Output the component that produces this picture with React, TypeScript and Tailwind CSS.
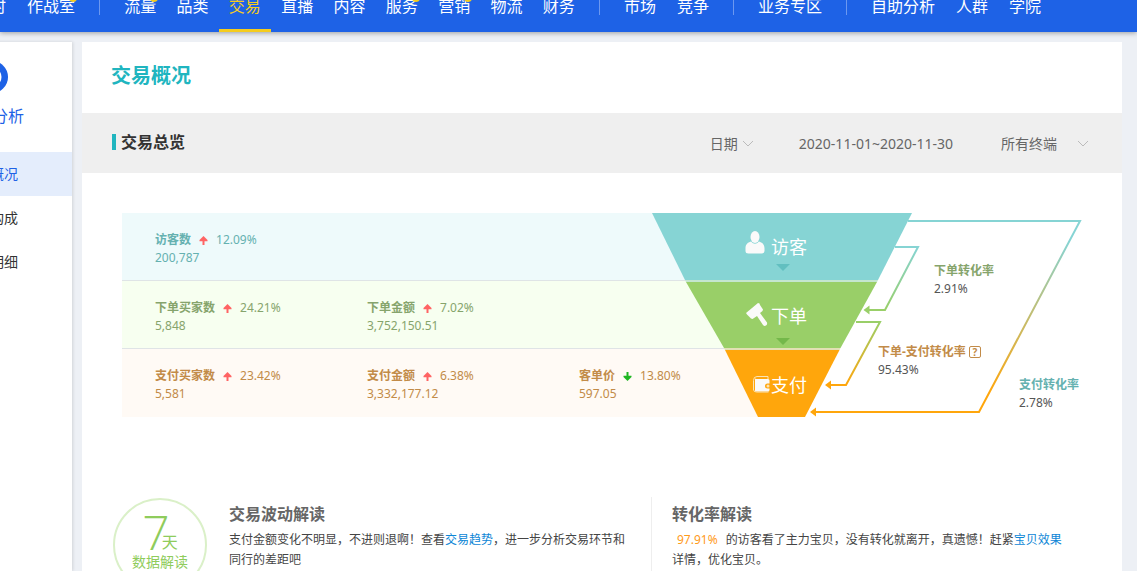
import clsx from "clsx";

const navGroups = [
  [{ name: "实时" }, { name: "作战室", isNew: true }],
  [
    { name: "流量", isNew: true },
    { name: "品类" },
    { name: "交易", active: true },
    { name: "直播" },
    { name: "内容" },
    { name: "服务", isNew: true },
    { name: "营销", isNew: true },
    { name: "物流" },
    { name: "财务" },
  ],
  [{ name: "市场" }, { name: "竞争" }],
  [{ name: "业务专区" }],
  [{ name: "自助分析" }, { name: "人群" }, { name: "学院" }],
] as { name: string; isNew?: boolean; active?: boolean }[][];

const sideItems = ["交易概况", "交易构成", "交易明细"];

const rows = [
  {
    className: "bg-[#eefafb] text-[#65b1b0] border-b border-[#dfe4e6]",
    items: [{ label: "访客数", change: "12.09%", up: true, value: "200,787" }],
  },
  {
    className: "bg-[#f7fff0] text-[#86a46c] border-b border-[#dfe4e6]",
    items: [
      { label: "下单买家数", change: "24.21%", up: true, value: "5,848" },
      { label: "下单金额", change: "7.02%", up: true, value: "3,752,150.51" },
    ],
  },
  {
    className: "bg-[#fffaf5] text-[#c28b48]",
    items: [
      { label: "支付买家数", change: "23.42%", up: true, value: "5,581" },
      { label: "支付金额", change: "6.38%", up: true, value: "3,332,177.12" },
      { label: "客单价", change: "13.80%", up: false, value: "597.05" },
    ],
  },
];

function Header() {
  return (
    <header className="relative z-10 flex h-8 items-end overflow-hidden bg-[#1e62e6]">
      <nav className="-ml-[36px] flex h-[52px] shrink-0 items-center text-base text-white">
        {navGroups.map((group, i) => (
          <div key={i} className="flex items-center">
            {i > 0 && <span className="mx-[14px] h-[18px] w-px bg-[#6c98f0]" />}
            <div className={clsx(i === 1 ? "grid w-[471px] grid-cols-9" : "flex gap-px")}>
              {group.map((item) => (
                <a
                  key={item.name}
                  href="#"
                  className={clsx(
                    "relative flex h-[52px] items-center justify-center border-b-3 px-[10px] pt-0.5 whitespace-nowrap",
                    item.active ? "border-[#f5cc1d] text-[#f5cc1d]" : "border-transparent",
                  )}
                >
                  {item.name}
                  {item.isNew && (
                    <span className="absolute top-3 right-2 h-[10px] w-2 rounded-full bg-[#f5cc1d]" />
                  )}
                </a>
              ))}
            </div>
          </div>
        ))}
      </nav>
    </header>
  );
}

function Sidebar() {
  return (
    <aside className="-ml-[88px] w-[160px] shrink-0 bg-white pt-[19px] shadow-[1px_0_3px_rgba(0,0,0,0.12)]">
      <div className="flex flex-col items-center gap-[11px] pb-6 text-base text-[#1e62e6]">
        <svg width="32" height="32" viewBox="0 0 32 32">
          <circle cx="16" cy="16" r="16" fill="#1e62e6" />
          <circle cx="16" cy="16" r="8" fill="none" stroke="#fff" strokeWidth="3" />
        </svg>
        <span>交易分析</span>
      </div>
      <nav className="text-sm text-[#333]">
        {sideItems.map((item, i) => (
          <a
            key={item}
            href="#"
            className={clsx(
              "flex h-11 items-center justify-center pr-1",
              i === 0 && "bg-[#e4edfc] text-[#1e62e6]",
            )}
          >
            {item}
          </a>
        ))}
      </nav>
    </aside>
  );
}

function Chevron() {
  return (
    <svg width="12" height="8" viewBox="0 0 12 8" fill="none" stroke="#bbb" className="pointer-events-none">
      <path d="M1 1l5 5 5-5" />
    </svg>
  );
}

function Toolbar() {
  return (
    <div className="flex h-[60px] items-center justify-between bg-[#efefef] pr-[33px] pl-[30px]">
      <h2 className="flex items-center gap-[5px] pb-0.5 text-base leading-4 font-bold text-[#333]">
        <span className="h-4 w-1 bg-[#20b5bf]" />
        交易总览
      </h2>
      <div className="flex items-center pt-0.5 text-sm text-[#666]">
        <div className="flex items-center gap-1">
          <select aria-label="日期" className="w-7 appearance-none">
            <option>日期</option>
          </select>
          <Chevron />
        </div>
        <span className="ml-[45px]">2020-11-01~2020-11-30</span>
        <div className="ml-12 flex items-center gap-5">
          <select aria-label="终端" className="w-14 appearance-none">
            <option>所有终端</option>
          </select>
          <Chevron />
        </div>
      </div>
    </div>
  );
}

function Arrow({ up }: { up: boolean }) {
  return (
    <svg width="9" height="9" viewBox="0 0 9 9" className={clsx("mt-px", !up && "rotate-180")}>
      <path d="M4.5 0L8.500 4V5.200H5.500V9H3.500V5.200H.5V4z" fill={up ? "#ff6464" : "#1fb622"} />
    </svg>
  );
}

function Stats() {
  return (
    <div className="mr-[320px] min-w-0 text-xs leading-[18px] [grid-area:1/1]">
      {rows.map((row, i) => (
        <div key={i} className={clsx("flex h-[68px] pt-[18px] pl-[33px]", row.className)}>
          {row.items.map((item) => (
            <dl key={item.label} className="w-[212px] shrink-0">
              <dt className="flex items-center">
                <b>{item.label}</b>
                <span className="mx-2">
                  <Arrow up={item.up} />
                </span>
                {item.change}
              </dt>
              <dd>{item.value}</dd>
            </dl>
          ))}
        </div>
      ))}
    </div>
  );
}

function Funnel() {
  return (
    <div className="relative z-0 h-[204px] w-[430px] justify-self-end text-xs leading-[18px] text-[#555] [grid-area:1/1]">
      <svg width="430" height="204" viewBox="0 0 430 204" className="absolute inset-0">
        <defs>
          <linearGradient id="pay" gradientUnits="userSpaceOnUse" x1="0" y1="8" x2="0" y2="199">
            <stop offset="0.1" stopColor="#86d4d4" />
            <stop offset="0.9" stopColor="#ffa60c" />
          </linearGradient>
          <linearGradient id="order" gradientUnits="userSpaceOnUse" x1="0" y1="34" x2="0" y2="97">
            <stop offset="0" stopColor="#86d4d4" />
            <stop offset="1" stopColor="#99cf68" />
          </linearGradient>
          <linearGradient id="orderPay" gradientUnits="userSpaceOnUse" x1="0" y1="109" x2="0" y2="172">
            <stop offset="0" stopColor="#99cf68" />
            <stop offset="1" stopColor="#ffa60c" />
          </linearGradient>
        </defs>
        {/* white backing hides the stat rows right of the funnel */}
        <path d="M260 0H430V204H153z" fill="#fff" />
        <path d="M0 0H260L226 67H33z" fill="#86d4d4" />
        <path d="M33 67H226L225 69H34z" fill="#c4e6cf" />
        <path d="M34 69H225L188.500 135H72z" fill="#99cf68" />
        <path d="M72 135H188.500L187.500 137H73z" fill="#e2e0b4" />
        <path d="M73 137H187.500L153 204H106z" fill="#ffa60c" />

        <g fill="none" strokeWidth="2">
          <path d="M256 8H428L327 199H163" stroke="url(#pay)" />
          <path d="M243 34H266L233 97H216" stroke="url(#order)" />
          <path d="M204 109H228L194 172H178" stroke="url(#orderPay)" />
        </g>
        <path d="M158 199l6-4.500v9z" fill="#ffa60c" />
        <path d="M211.500 97l6-4.500v9z" fill="#99cf68" />
        <path d="M173 172l6-4.500v9z" fill="#ffa60c" />

        <path d="M124 51h14l-7 7z" fill="#62bfc0" />
        <path d="M124 125h14l-7 7z" fill="#74b84a" />

        <g fill="#fafafa">
          <ellipse cx="103" cy="24" rx="4.500" ry="6" />
          <path d="M99 28.500q4 4.500 8 0c3.500 1 5.500 3 5.500 7v2.500q0 2.500-3 2.500h-13q-3 0-3-2.500v-2.500c0-4 2-6 5.500-7z" />
          <path d="M94 100l3-2.500 9-7.500 1.500 .5.500 1.500 3 4.500-.5 1.500-2.500 2 7 9.500q.5 2-1 3t-3-.5L105 103l-4.500 3-1.500-.5-4-4z" />
        </g>
        {/* wallet */}
        <path d="M101.500 177v-9.500q0-4 3.500-4h11v3" fill="none" stroke="#fbe3b5" />
        <path d="M104 166h12q1.500 0 1.500 1.500v3h-2q-2.500 0-2.500 2.500t2.500 2.500h2v1.500q0 1.500-1.500 1.500h-12q-1 0-1-1v-11q0-1 1-1z" fill="#fafafa" />
        <path d="M101.500 176.500q0 2.500 3 2.500h12" fill="none" stroke="#fbe3b5" />
        <circle cx="116" cy="173" r="1.500" fill="#fbe3b5" />
      </svg>
      <span className="absolute top-[25px] left-[119px] text-lg leading-[18px] text-white">访客</span>
      <span className="absolute top-[94px] left-[119px] text-lg leading-[18px] text-white">下单</span>
      <span className="absolute top-[163px] left-[119px] text-lg leading-[18px] text-white">支付</span>

      <dl className="absolute top-[49px] left-[282px]">
        <dt className="font-bold text-[#86a46c]">下单转化率</dt>
        <dd>2.91%</dd>
      </dl>
      <dl className="absolute top-[130px] left-[226px]">
        <dt className="flex items-center gap-[3px] font-bold whitespace-nowrap text-[#c28b48]">
          下单-支付转化率
          <button
            aria-label="说明"
            className="flex size-3 items-center justify-center rounded-xs border border-[#c28b48] text-[10px] leading-none"
          >
            ?
          </button>
        </dt>
        <dd>95.43%</dd>
      </dl>
      <dl className="absolute top-[163px] left-[367px]">
        <dt className="font-bold whitespace-nowrap text-[#65b1b0]">支付转化率</dt>
        <dd>2.78%</dd>
      </dl>
    </div>
  );
}

function Insights() {
  return (
    <section className="mt-20 flex pl-[31px] text-xs leading-5 text-[#444]">
      <div className="mt-px flex size-[94px] shrink-0 flex-col items-center rounded-full border-2 border-[#daf0c8] pt-3 text-[#8fcc5c]">
        <div className="flex items-end">
          <span className="font-['Open_Sans'] text-5xl leading-10 font-light">7</span>
          <span className="-ml-2 text-base leading-5">天</span>
        </div>
        <span className="text-sm leading-5">数据解读</span>
      </div>
      <div className="ml-[22px] w-[423px] shrink-0 border-r border-[#eee] pt-[7px] pr-5">
        <h3 className="mb-1.5 text-base leading-5 font-bold text-[#666]">交易波动解读</h3>
        <p>
          支付金额变化不明显，不进则退啊！查看
          <a href="#" className="text-[#0d86d6]">交易趋势</a>
          ，进一步分析交易环节和同行的差距吧
        </p>
      </div>
      <div className="min-w-0 flex-1 pt-[7px] pr-[55px] pl-5">
        <h3 className="mb-1.5 text-base leading-5 font-bold text-[#666]">转化率解读</h3>
        <p>
          <span className="mx-[5px] text-[#ff9a1a]">97.91%</span>
          <span> 的访客看了主力宝贝，没有转化就离开，真遗憾！赶紧</span>
          <a href="#" className="text-[#0d86d6]">宝贝效果</a>
          详情，优化宝贝。
        </p>
      </div>
    </section>
  );
}

export default function App() {
  return (
    <div
      lang="zh-CN"
      className="flex h-screen flex-col overflow-hidden bg-[#edf0f5] font-['Noto_Sans','Noto_Sans_CJK_SC',sans-serif]"
    >
      <div className="relative z-10 shadow-[0_1px_5px_rgba(0,0,0,0.35)]">
        <Header />
      </div>
      <div className="flex min-h-0 flex-1 gap-[10px] pt-[10px]">
        <Sidebar />
        <main className="mr-[15px] min-w-0 flex-1 bg-white">
          <h1 className="flex h-[71px] items-center pb-[3px] pl-[29px] text-xl font-bold text-[#20b5bf]">交易概况</h1>
          <Toolbar />
          <div className="grid grid-cols-1 px-10 pt-10">
            <Stats />
            <Funnel />
          </div>
          <Insights />
        </main>
      </div>
    </div>
  );
}
